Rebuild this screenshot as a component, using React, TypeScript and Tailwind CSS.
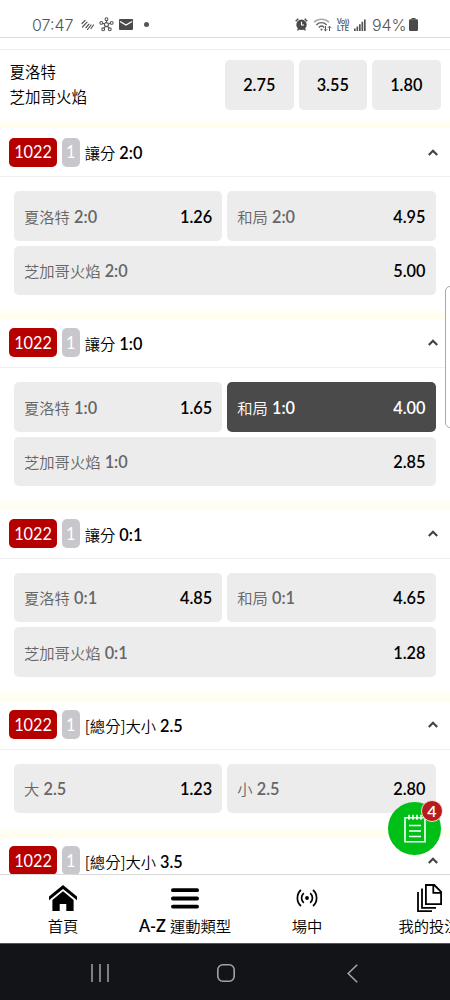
import { clsx } from "clsx"

type Option = {
  name: string
  line: string
  odds: string
  wide?: boolean
  selected?: boolean
}

type Market = {
  id: string
  name: string
  line: string
  options: Array<Option>
}

const home = "夏洛特"
const away = "芝加哥火焰"

const matchOdds = ["2.75", "3.55", "1.80"]

const markets: Array<Market> = [
  {
    id: "handicap-2-0",
    name: "讓分",
    line: "2:0",
    options: [
      { name: home, line: "2:0", odds: "1.26" },
      { name: "和局", line: "2:0", odds: "4.95" },
      { name: away, line: "2:0", odds: "5.00", wide: true },
    ],
  },
  {
    id: "handicap-1-0",
    name: "讓分",
    line: "1:0",
    options: [
      { name: home, line: "1:0", odds: "1.65" },
      { name: "和局", line: "1:0", odds: "4.00", selected: true },
      { name: away, line: "1:0", odds: "2.85", wide: true },
    ],
  },
  {
    id: "handicap-0-1",
    name: "讓分",
    line: "0:1",
    options: [
      { name: home, line: "0:1", odds: "4.85" },
      { name: "和局", line: "0:1", odds: "4.65" },
      { name: away, line: "0:1", odds: "1.28", wide: true },
    ],
  },
  {
    id: "total-2-5",
    name: "[總分]大小",
    line: "2.5",
    options: [
      { name: "大", line: "2.5", odds: "1.23" },
      { name: "小", line: "2.5", odds: "2.80" },
    ],
  },
  {
    id: "total-3-5",
    name: "[總分]大小",
    line: "3.5",
    options: [],
  },
]

const StatusBar = () => (
  <div className="flex h-[38px] shrink-0 items-center border-b border-[#dcdcdc] pt-3 pl-8 font-[Inter,'Noto_Sans_CJK_TC',sans-serif] text-[#555]">
    <span className="w-[42px] text-[16px] leading-none font-light whitespace-nowrap">07:47</span>
    <svg className="ml-[7px] h-3 w-[13px]" viewBox="0 0 13 12" fill="none" stroke="#555" strokeWidth="1.2" strokeLinecap="round">
      <path d="M1 4.5 4 1.5M1.5 8 6 3.2M5 8.5l3-3.4M6.5 10.5 10 6M10 9.5 12.5 6" />
    </svg>
    <svg className="ml-[5px] h-[15px] w-[15px]" viewBox="0 0 15 15" fill="none" stroke="#555" strokeWidth="1.1">
      <path d="M7.5 5.5V3.5M9.5 7l2-.7M8.6 9.4l1.5 2M6.4 9.4l-1.5 2M5.5 7l-2-.7" />
      <circle cx="7.5" cy="7.6" r="2" />
      <circle cx="7.5" cy="2.2" r="1.4" />
      <circle cx="12.7" cy="5.9" r="1.4" />
      <circle cx="10.8" cy="12.3" r="1.4" />
      <circle cx="4.2" cy="12.3" r="1.4" />
      <circle cx="2.3" cy="5.9" r="1.4" />
    </svg>
    <svg className="ml-[5px] h-[11px] w-[14px]" viewBox="0 0 14 11">
      <rect width="14" height="11" rx="1" fill="#4a4a4a" />
      <path d="M1 2.5 7 6l6-3.5" fill="none" stroke="#fff" strokeWidth="1.4" />
    </svg>
    <span className="ml-[11px] h-[5px] w-[5px] rounded-full bg-[#555]" />

    <svg className="ml-[146px] h-[13px] w-[13px]" viewBox="0 0 13 13">
      <circle cx="6.5" cy="6.8" r="5.2" fill="#4a4a4a" />
      <path d="M.7 3.3 3.3.8M12.3 3.3 9.7.8M2.5 12.4l1.3-1.6M10.5 12.4 9.2 10.8" stroke="#4a4a4a" strokeWidth="1.4" />
      <path d="M6.5 3.7V7H9" fill="none" stroke="#fff" strokeWidth="1.1" />
    </svg>
    <svg className="ml-[5px] h-[14px] w-[19px]" viewBox="0 0 19 14" fill="none" strokeWidth="1.4">
      <path d="M1 4.3C5 .2 12 .2 16 4.3" stroke="#aaa" />
      <path d="M3.3 6.9c3-3 7.5-3 10.4 0" stroke="#666" />
      <path d="M5.8 9.4c1.7-1.6 3.9-1.6 5.5 0" stroke="#555" />
      <circle cx="8.5" cy="11.4" r="1" fill="#555" stroke="none" />
      <path d="M12.5 8v4.8M10.9 11.3l1.6 1.6 1.6-1.6M16.5 13V8.2M14.9 9.8l1.6-1.6 1.6 1.6" stroke="#555" strokeWidth="1" />
    </svg>
    <span className="ml-[4px] w-[14px] text-center text-[7px] leading-[7px] font-semibold">
      <span className="block tracking-[-0.4px] whitespace-nowrap">Vo))</span>
      <span className="block">LTE</span>
    </span>
    <svg className="ml-[4px] h-3 w-3" viewBox="0 0 12 12" fill="#555">
      <path d="M0 9.5h1.7V12H0zM2.5 7.5h1.700V12H2.500zM5 5.200h1.700V12H5zM7.500 2.800h1.700V12H7.500zM10 .5h1.700V12H10z" />
    </svg>
    <span className="ml-[6px] w-[36.5px] text-[16px] leading-none font-light tracking-[-0.1px] whitespace-nowrap">94%</span>
    <svg className="h-[13px] w-[9px]" viewBox="0 0 9 13" fill="#4a4a4a">
      <path d="M2.5 0h4v1.3h-4z" />
      <rect y="1.2" width="9" height="11.8" rx="1.3" />
    </svg>
  </div>
)

const MatchRow = () => (
  <div className="flex h-[70px] items-center pr-[9.5px] pb-px pl-[9.5px]">
    <div className="flex-1 pt-px text-[15.5px] leading-[25px] font-[350]">
      <p>{home}</p>
      <p>{away}</p>
    </div>
    <div className="flex gap-[5px]">
      {matchOdds.map((odds) => (
        <div
          key={odds}
          className="flex h-[50px] w-[68.5px] items-center justify-center rounded-[5px] bg-[#ececec] pt-[2px] text-[16.3px] font-semibold"
        >
          {odds}
        </div>
      ))}
    </div>
  </div>
)

const OptionButton = ({ name, line, odds, wide, selected }: Option) => (
  <div
    className={clsx(
      "flex h-[49.7px] items-center justify-between rounded-[5px] px-[10px] pt-[2px]",
      wide && "col-span-2",
      selected ? "bg-[#4a4a4a] text-white" : "bg-[#ececec] text-black",
    )}
  >
    <p className={clsx("text-[15.3px] font-[350]", !selected && "text-[#666]")}>
      {name} <span className="text-[16.3px] font-semibold">{line}</span>
    </p>
    <p className="text-[16.3px] font-semibold">{odds}</p>
  </div>
)

const MarketSection = ({ name, line, options }: Market) => (
  <section>
    <div className="flex h-[49px] items-center border-b border-[#f0f0f2] pr-3 pl-[9.3px]">
      <span className="flex h-[29px] w-[47.5px] items-center justify-center rounded-[5px] bg-[#b60000] pt-px text-[16.3px] text-white">
        1022
      </span>
      <span className="ml-[5px] flex h-[29px] w-[18px] items-center justify-center rounded-[5px] bg-[#c7c7cc] pt-px text-[16.3px] text-white">
        1
      </span>
      <p className="ml-[5px] flex-1 pt-[2px] text-[15.3px]">
        <span className="font-['Noto_Sans_CJK_TC',sans-serif] leading-6 font-[350]">{name}</span>{" "}
        <span className="text-[16.3px] font-semibold">{line}</span>
      </p>
      <svg className="h-[7px] w-[10px]" viewBox="0 0 10 7" fill="none" stroke="#444" strokeWidth="2.2">
        <path d="M.8 6 5 1.8 9.2 6" />
      </svg>
    </div>
    {options.length > 0 && (
      <>
        <div className="grid grid-cols-2 gap-[5px] pt-[14px] pr-[14.5px] pb-[13.5px] pl-[14px]">
          {options.map((option) => (
            <OptionButton key={option.name} {...option} />
          ))}
        </div>
        <div className="h-[10px] bg-linear-to-b from-[#fffff8] to-[#fffdec]" />
      </>
    )}
  </section>
)

const BetSlipButton = () => (
  <div className="absolute top-[802px] left-[388px] flex h-[53px] w-[53px] items-center justify-center rounded-full bg-[#00bf16]">
    <svg className="h-[29px] w-[22px]" viewBox="0 0 22 29" fill="none" stroke="#fff" strokeWidth="1.6">
      <path d="M1 3.8h20v24H1zM5 .8v5M9 .8v5M13 .8v5M17 .8v5M5 11.500h12M5 17h12M5 22.500h12" />
    </svg>
    <span className="absolute -top-[2px] left-[33px] flex h-[22px] w-[22px] items-center justify-center rounded-full border border-[#f3dede] bg-[#b71c1c] text-[16px] leading-none font-semibold text-white">
      4
    </span>
  </div>
)

const HomeIcon = () => (
  <svg className="h-[26px] w-[28px]" viewBox="0 0 28 26">
    <path d="M0 11.5 14 0l14 11.5v3.8L14 4 0 15.3z" />
    <path d="M14 6.2 24.6 15v11H17.3v-7h-6.6v7H3.4V15z" />
  </svg>
)

const MenuIcon = () => (
  <svg className="h-[21px] w-[28px]" viewBox="0 0 28 21" stroke="#000" strokeWidth="3.8" strokeLinecap="round">
    <path d="M1.9 2.2h24.2M1.9 10.5h24.2M1.9 18.6h24.2" />
  </svg>
)

const LiveIcon = () => (
  <svg className="h-[18px] w-[22px]" viewBox="0 0 22 18" fill="none" stroke="#000" strokeWidth="1.7">
    <path d="M5 1C.2 5 .2 13 5 17M17 1c4.8 4 4.8 12 0 16M7.8 4.2c-3 2.6-3 7 0 9.6M14.2 4.2c3 2.6 3 7 0 9.6" />
    <circle cx="11" cy="9" r="1.9" fill="#000" stroke="none" />
  </svg>
)

const BetsIcon = () => (
  <svg className="h-[28px] w-[25px]" viewBox="0 0 25 28" fill="none" stroke="#000" strokeWidth="1.8">
    <path d="M8.9 1h8.4l6.8 6.8v12.4H8.9zM16.3 1v7.8h7.8M5 4.5v19.3h14M1 8v19.1h14" />
  </svg>
)

type NavItemProps = {
  icon: React.ReactNode
  label: string
  prefix?: string
}

const NavItem = ({ icon, label, prefix }: NavItemProps) => (
  <div className="flex w-[122px] shrink-0 flex-col items-center whitespace-nowrap">
    <div className="flex h-[39px] items-center pt-[7px]">{icon}</div>
    <div className="flex h-6 items-center gap-1 leading-6 font-[350]">
      {prefix && <span className="text-[16.3px] font-semibold">{prefix}</span>}
      <span>{label}</span>
    </div>
  </div>
)

const BottomNav = () => (
  <nav className="flex h-[69px] shrink-0 overflow-hidden border-t border-[#d9d9d9] bg-white pl-[2px] text-[15.3px]">
    <NavItem icon={<HomeIcon />} label="首頁" />
    <NavItem icon={<MenuIcon />} label="運動類型" prefix="A-Z" />
    <NavItem icon={<LiveIcon />} label="場中" />
    <NavItem icon={<BetsIcon />} label="我的投注" />
  </nav>
)

const SystemBar = () => (
  <div className="flex h-[57px] shrink-0 items-center border-t border-[#555] bg-[#131418] pt-[2px] pl-[91px]">
    <svg className="h-[18px] w-[18px]" viewBox="0 0 18 18" stroke="#a3a3a7" strokeWidth="1.5">
      <path d="M1 0v18M9 0v18M17 0v18" />
    </svg>
    <svg className="ml-[108px] h-[18px] w-[18px]" viewBox="0 0 18 18" fill="none" stroke="#a3a3a7" strokeWidth="1.6">
      <rect x=".8" y=".8" width="16.4" height="16.4" rx="5" />
    </svg>
    <svg className="ml-[112px] h-[19px] w-[11px]" viewBox="0 0 11 19" fill="none" stroke="#a3a3a7" strokeWidth="1.6">
      <path d="M10.2.7 1.2 9.5l9 8.8" />
    </svg>
  </div>
)

export default function App() {
  return (
    <div className="relative flex h-[1000px] w-[450px] flex-col overflow-hidden bg-white font-[Lato,'Noto_Sans_CJK_TC',sans-serif] text-black">
      <StatusBar />
      <div className="h-3 shrink-0 border-b border-[#ececec]" />
      <main className="min-h-0 flex-1 overflow-hidden">
        <MatchRow />
        <div className="h-2 bg-linear-to-b from-[#fffff8] to-[#fffdec]" />
        {markets.map((market) => (
          <MarketSection key={market.id} {...market} />
        ))}
      </main>
      <BottomNav />
      <SystemBar />
      <div className="absolute top-[286px] left-[445px] h-[142px] w-4 rounded-[5px] border border-[#aaa] bg-white" />
      <BetSlipButton />
    </div>
  )
}
